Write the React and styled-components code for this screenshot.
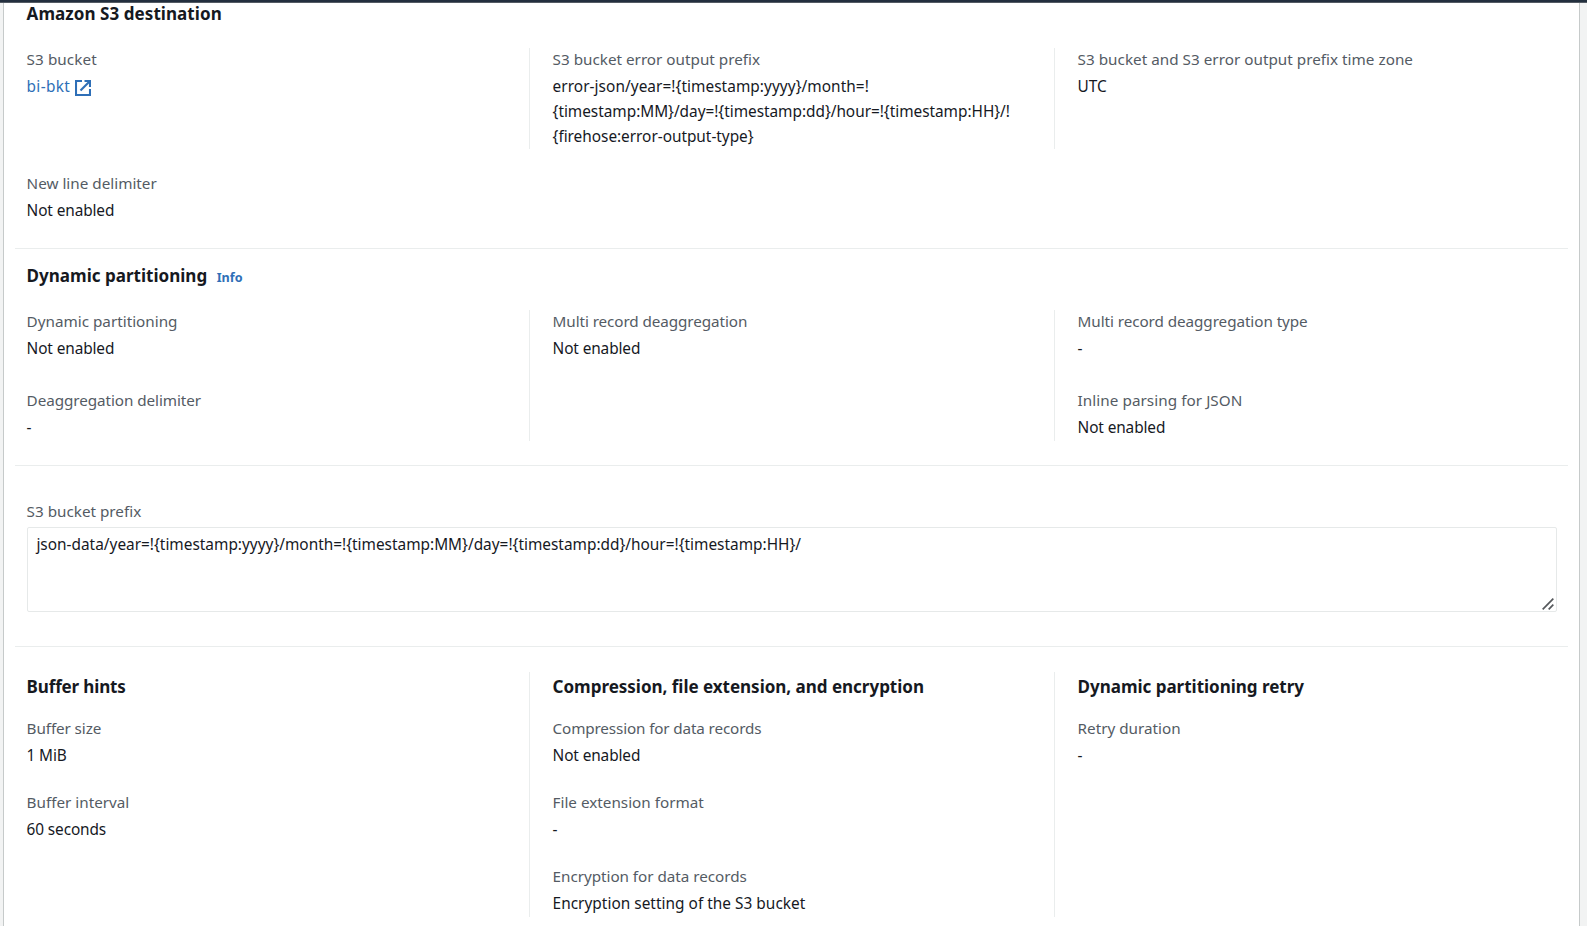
import React from "react";
import styled, { createGlobalStyle } from "styled-components";

const GlobalStyle = createGlobalStyle`
  * { box-sizing: border-box; }
  html, body { margin: 0; height: 100%; overflow: hidden; }
  body {
    background: #f2f3f3;
    color: #16191f;
    font-family: "Noto Sans", "Open Sans", sans-serif;
    font-size: 15.4px;
    line-height: 25px;
  }
`;

const Page = styled.div`
  height: 926px;
  display: flex;
  flex-direction: column;
  overflow: hidden;
`;

const TopBar = styled.header`
  flex: none;
  height: 3px;
  background: #232f3e;
  border-bottom: 1px solid #545b64;
`;

const Panel = styled.main`
  flex: 1;
  margin: 0 7px 0 3px;
  padding: 0 11px;
  background: #fff;
  border: solid #c6caca;
  border-width: 0 1px;
`;

const Section = styled.section`
  display: flow-root;
  height: ${(p) => p.$height}px;
  padding: ${(p) => p.$top || 0}px 11px 0 11.6px;
  border-bottom: ${(p) => (p.$last ? "none" : "1px solid #eaeded")};
`;

const HeadingRow = styled.div`
  display: flex;
  align-items: baseline;
  gap: 9.5px;
`;

const Heading = styled.h3`
  margin: 0 0 ${(p) => p.$below || 0}px;
  font-size: 17.05px;
  font-weight: 700;
  line-height: ${(p) => p.$line || 24}px;
  letter-spacing: ${(p) => p.$track || 0}px;
`;

const InfoLink = styled.a`
  color: #2e6fb7;
  font-size: 12.6px;
  font-weight: 700;
  line-height: 20px;
`;

const Columns = styled.div`
  display: grid;
  grid-template-columns: 502.4px 525px 1fr;
  margin-top: ${(p) => p.$gap}px;
  height: ${(p) => p.$height}px;
`;

const Column = styled.div`
  display: flex;
  flex-direction: column;
  padding-top: ${(p) => p.$top || 0}px;

  & + & {
    padding-left: 22.6px;
    border-left: 1px solid #eaeded;
  }
`;

const Field = styled.div`
  margin-bottom: ${(p) => p.$below || 0}px;
`;

const Label = styled.div`
  margin-bottom: 3px;
  color: #545b64;
  font-size: 15.25px;
  line-height: 23px;
  letter-spacing: ${(p) => p.$track || 0}px;
`;

const Value = styled.div`
  min-height: 25px;
  letter-spacing: ${(p) => p.$track || 0}px;
`;

const FirstLine = styled.div`
  letter-spacing: 0.05px;
`;

const BucketLink = styled.a`
  display: flex;
  align-items: center;
  gap: 5.4px;
  color: #2e6fb7;
  letter-spacing: 0.3px;

  svg {
    flex: none;
    margin-top: 2px;
  }
`;

const PrefixBox = styled.div`
  position: relative;
  margin-top: 4px;

  svg {
    position: absolute;
    right: 3px;
    bottom: 2px;
  }
`;

const PrefixInput = styled.textarea`
  display: block;
  width: 100%;
  height: 85px;
  margin: 0;
  padding: 4px 8.8px;
  border: 1px solid #e6e9e9;
  border-radius: 2px;
  outline: none;
  background: #fff;
  color: inherit;
  font: inherit;
  resize: none;
`;

const ExternalIcon = () => (
  <svg width="16" height="16" viewBox="0 0 16 16" fill="none" stroke="currentColor" strokeWidth="2.1">
    <path d="M7 1H1v14h14V9" />
    <path d="M9.5 1H15v6" />
    <path d="M15 1 5.5 10.5" />
  </svg>
);

const ResizeGrip = () => (
  <svg width="12" height="12" viewBox="0 0 12 12" fill="none" stroke="#55585c" strokeWidth="1.7">
    <path d="M.7 11.3 11.3.7" />
    <path d="m6.7 11.3 4.6-4.6" />
  </svg>
);

const Item = ({ label, value, labelTrack, valueTrack, below, children }) => (
  <Field $below={below}>
    <Label $track={labelTrack}>{label}</Label>
    <Value $track={value === "Not enabled" ? -0.12 : valueTrack}>{children || value}</Value>
  </Field>
);

export default function App() {
  return (
    <Page>
      <GlobalStyle />
      <TopBar />
      <Panel>
        <Section $height={246}>
          <Heading $line={22} $track={0.05}>Amazon S3 destination</Heading>
          <Columns $gap={23} $height={101}>
            <Column>
              <Item label="S3 bucket" labelTrack={0.08}>
                <BucketLink>
                  bi-bkt <ExternalIcon />
                </BucketLink>
              </Item>
            </Column>
            <Column>
              <Item label="S3 bucket error output prefix" valueTrack={-0.03}>
                <FirstLine>{"error-json/year=!{timestamp:yyyy}/month=!"}</FirstLine>
                {"{timestamp:MM}/day=!{timestamp:dd}/hour=!{timestamp:HH}/!"}
                <br />
                {"{firehose:error-output-type}"}
              </Item>
            </Column>
            <Column>
              <Item label="S3 bucket and S3 error output prefix time zone" value="UTC" labelTrack={0.02} />
            </Column>
          </Columns>
          <Columns $gap={23} $height={51}>
            <Item label="New line delimiter" value="Not enabled" />
          </Columns>
        </Section>

        <Section $height={217} $top={15}>
          <HeadingRow>
            <Heading>Dynamic partitioning</Heading>
            <InfoLink>Info</InfoLink>
          </HeadingRow>
          <Columns $gap={22} $height={131}>
            <Column>
              <Item label="Dynamic partitioning" value="Not enabled" below={28} />
              <Item label="Deaggregation delimiter" value="-" labelTrack={-0.07} />
            </Column>
            <Column>
              <Item label="Multi record deaggregation" value="Not enabled" labelTrack={-0.09} />
            </Column>
            <Column>
              <Item label="Multi record deaggregation type" value="-" labelTrack={-0.07} below={28} />
              <Item label="Inline parsing for JSON" value="Not enabled" labelTrack={0.06} />
            </Column>
          </Columns>
        </Section>

        <Section $height={181} $top={34}>
          <Label>S3 bucket prefix</Label>
          <PrefixBox>
            <PrefixInput
              readOnly
              value="json-data/year=!{timestamp:yyyy}/month=!{timestamp:MM}/day=!{timestamp:dd}/hour=!{timestamp:HH}/"
            />
            <ResizeGrip />
          </PrefixBox>
        </Section>

        <Section $height={280} $top={25} $last>
          <Columns $gap={0} $height={245}>
            <Column $top={3}>
              <Heading $track={-0.15} $below={18}>Buffer hints</Heading>
              <Item label="Buffer size" value="1 MiB" labelTrack={-0.1} valueTrack={-0.15} below={23} />
              <Item label="Buffer interval" value="60 seconds" valueTrack={-0.12} />
            </Column>
            <Column $top={3}>
              <Heading $track={-0.03} $below={18}>Compression, file extension, and encryption</Heading>
              <Item label="Compression for data records" value="Not enabled" labelTrack={-0.14} below={23} />
              <Item label="File extension format" value="-" below={23} />
              <Item
                label="Encryption for data records"
                value="Encryption setting of the S3 bucket"
                labelTrack={-0.04}
                valueTrack={0.02}
              />
            </Column>
            <Column $top={3}>
              <Heading $track={-0.03} $below={18}>Dynamic partitioning retry</Heading>
              <Item label="Retry duration" value="-" />
            </Column>
          </Columns>
        </Section>
      </Panel>
    </Page>
  );
}
